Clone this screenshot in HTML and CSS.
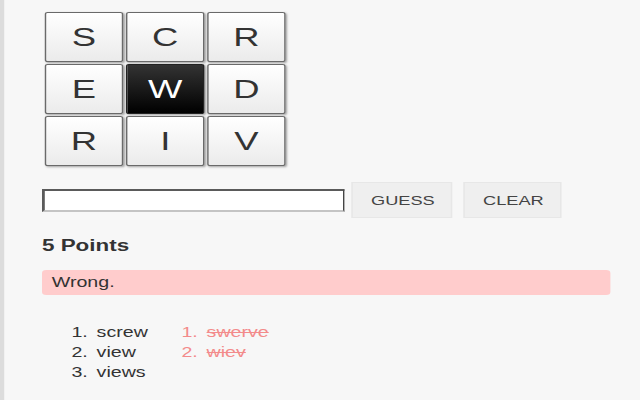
FILE: index.html
```html
<!DOCTYPE html>
<html lang="en">
<head>
<meta charset="utf-8">
<title>Word Grid</title>
<link rel="stylesheet" href="styles.css">
</head>
<body>
<div class="page">
  <div class="board">
    <div class="tile">S</div>
    <div class="tile">C</div>
    <div class="tile">R</div>
    <div class="tile">E</div>
    <div class="tile tile-active">W</div>
    <div class="tile">D</div>
    <div class="tile">R</div>
    <div class="tile">I</div>
    <div class="tile">V</div>
  </div>
  <div class="controls">
    <input class="guess-input" type="text">
    <button class="btn btn-guess">GUESS</button>
    <button class="btn btn-clear">CLEAR</button>
  </div>
  <h3 class="points">5 Points</h3>
  <div class="alert">Wrong.</div>
  <div class="lists">
    <ol class="words">
      <li>screw</li>
      <li>view</li>
      <li>views</li>
    </ol>
    <ol class="words words-wrong">
      <li>swerve</li>
      <li>wiev</li>
    </ol>
  </div>
</div>
</body>
</html>
```

FILE: styles.css
```css
html, body {
  margin: 0;
  padding: 0;
}
body {
  background: #f7f7f7;
  overflow: hidden;
  font-family: "Liberation Sans", Arial, sans-serif;
  color: #333;
}
.page {
  box-sizing: border-box;
  width: 457.14px;
  min-height: 400px;
  border-left: 3px solid #dcdcdc;
  padding: 12px 21px 0 27px;
  transform: scaleX(1.4);
  transform-origin: 0 0;
}
.board {
  display: grid;
  grid-template-columns: repeat(3, 56px);
  grid-auto-rows: 50px;
  column-gap: 2px;
  row-gap: 2px;
  margin-left: 2px;
}
.tile {
  box-sizing: border-box;
  display: flex;
  align-items: center;
  justify-content: center;
  border: 1px solid #6a6a6a;
  border-radius: 2px;
  background: linear-gradient(#ffffff, #ebebeb);
  box-shadow: 1px 1px 2px rgba(0, 0, 0, 0.35);
  font-size: 26px;
  color: #333;
}
.tile-active {
  background: linear-gradient(#333333, #000000);
  border-color: #222;
  color: #fff;
}
.controls {
  display: flex;
  align-items: center;
  margin-top: 16px;
  height: 36px;
}
.guess-input {
  box-sizing: border-box;
  width: 216px;
  height: 23px;
  margin: 1px 0 0 0;
  padding: 0 3px;
  background: #fff;
  border-style: solid;
  border-width: 2px 1px 2px 2px;
  border-color: #5a5a5a #444 #c4c4c4 #5a5a5a;
  font-family: "Liberation Sans", Arial, sans-serif;
  font-size: 14px;
}
.btn {
  box-sizing: border-box;
  height: 36px;
  padding: 0 13px;
  background: #efefef;
  border: 1px solid #e7e7e7;
  font-family: "Liberation Sans", Arial, sans-serif;
  font-size: 13px;
  color: #444;
}
.btn-guess {
  margin-left: 5px;
  width: 72px;
}
.btn-clear {
  margin-left: 8px;
  width: 70px;
}
.points {
  margin: 19px 0 0 0;
  font-size: 16px;
  font-weight: bold;
  line-height: 18px;
  color: #333;
}
.alert {
  margin-top: 15px;
  height: 25px;
  box-sizing: border-box;
  padding: 3px 7px;
  line-height: 19px;
  font-size: 14px;
  background: #ffcccc;
  border-radius: 3px;
  color: #333;
}
.lists {
  display: flex;
  gap: 24px;
  margin-top: 27px;
  margin-left: 21px;
}
.words {
  list-style: none;
  margin: 0;
  padding: 0;
  counter-reset: item;
  font-size: 14px;
  line-height: 20px;
}
.words li {
  counter-increment: item;
}
.words li::before {
  content: counter(item) ".";
  display: inline-block;
  width: 18px;
}
.words-wrong {
  color: #f38b8b;
}
.words-wrong li {
  text-decoration: line-through;
}
.words-wrong li::before {
  text-decoration: none;
}
```
